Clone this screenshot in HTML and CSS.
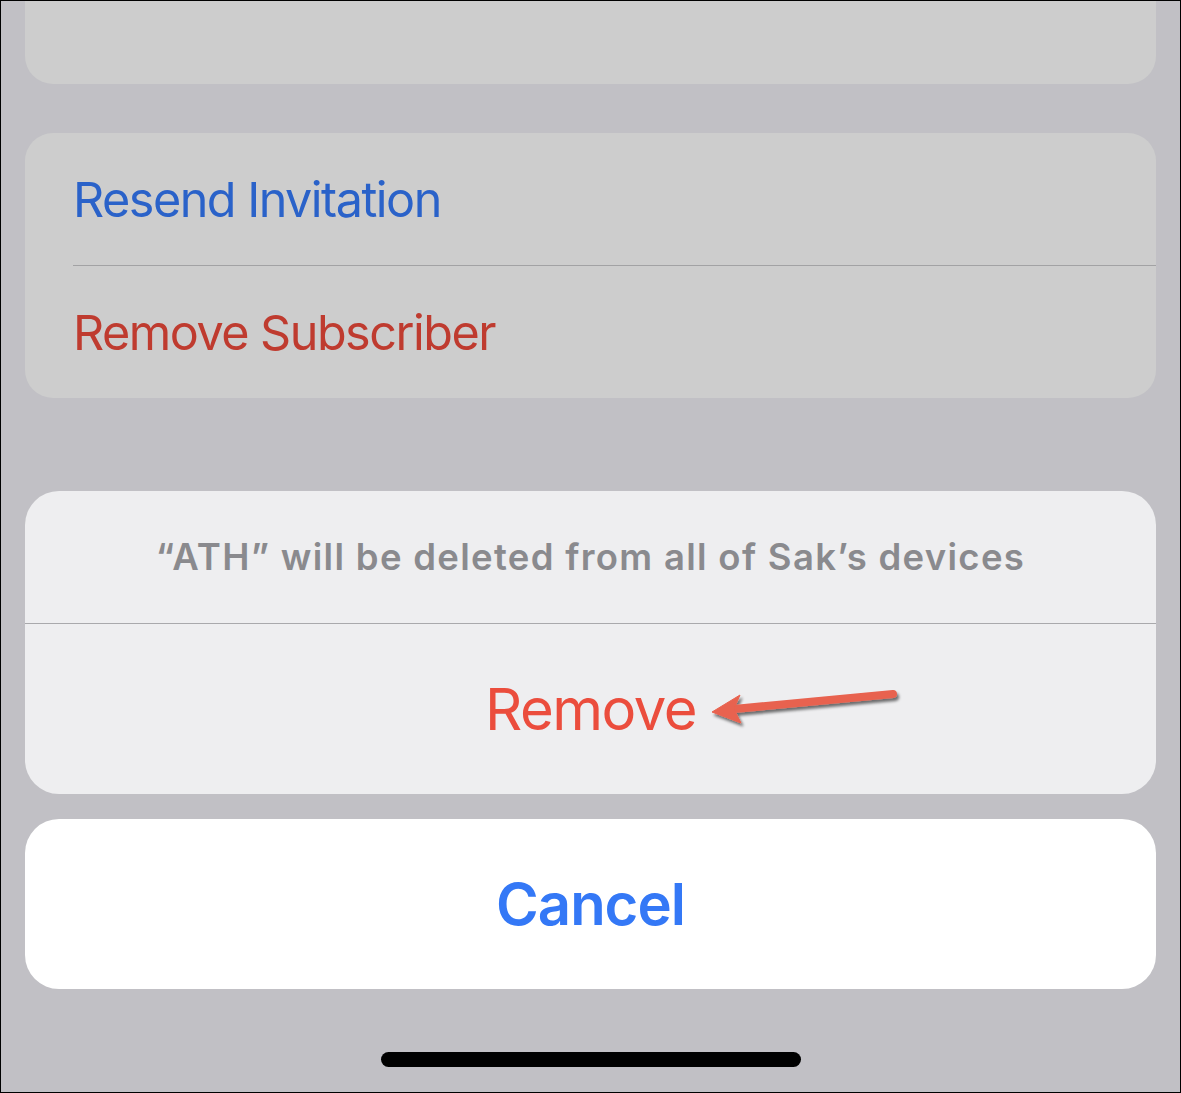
FILE: index.html
```html
<!DOCTYPE html>
<html lang="en">
<head>
<meta charset="utf-8">
<title>Remove Subscriber</title>
<link rel="stylesheet" href="styles.css">
</head>
<body>
<div class="frame">
  <div class="card card-top"></div>

  <div class="card card-list">
    <div class="row row-blue">Resend Invitation</div>
    <div class="row row-red">Remove Subscriber</div>
  </div>

  <div class="sheet">
    <div class="sheet-msg">“ATH” will be deleted from all of Sak’s devices</div>
    <div class="sheet-action">Remove</div>
  </div>

  <div class="cancel">Cancel</div>

  <div class="home-bar"></div>

  <svg class="annot" width="1181" height="1093" viewBox="0 0 1181 1093" aria-hidden="true">
    <defs>
      <filter id="sh" x="-20%" y="-50%" width="140%" height="200%">
        <feGaussianBlur in="SourceAlpha" stdDeviation="1.6"/>
        <feOffset dx="2" dy="3" result="b"/>
        <feComponentTransfer><feFuncA type="linear" slope="0.55"/></feComponentTransfer>
        <feMerge><feMergeNode/><feMergeNode in="SourceGraphic"/></feMerge>
      </filter>
    </defs>
    <g filter="url(#sh)" fill="#e8624f" stroke="#e8624f">
      <line x1="893" y1="694" x2="734" y2="709" stroke-width="8" stroke-linecap="round"/>
      <polygon points="712,712 740,695 734,709 741,723" stroke-width="1" stroke-linejoin="round"/>
    </g>
  </svg>
</div>
</body>
</html>
```
FILE: styles.css
```css
html, body {
  margin: 0;
  padding: 0;
  background: #c1c0c5;
}

.frame {
  position: relative;
  box-sizing: border-box;
  width: 1181px;
  height: 1093px;
  border: 1px solid #000;
  background: #c1c0c5;
  padding: 0 24px;
  display: flex;
  flex-direction: column;
  overflow: hidden;
  font-family: Inter, "Noto Sans", "Liberation Sans", sans-serif;
}

.card {
  background: #cdcdcd;
}

.card-top {
  height: 83px;
  border-radius: 0 0 28px 28px;
  flex: none;
}

.card-list {
  margin-top: 49px;
  border-radius: 28px;
  flex: none;
}

.row {
  height: 132px;
  display: flex;
  align-items: center;
  padding-left: 48px;
  font-size: 48.5px;
  letter-spacing: -1.5px;
}

.row-blue {
  color: #2a62c9;
  border-bottom: 1px solid #a2a2a4;
  margin-left: 48px;
  padding-left: 0;
}

.row-red {
  color: #bf3b2f;
  height: 132px;
}

.sheet {
  margin-top: 93px;
  background: #eeeef0;
  border-radius: 34px;
  flex: none;
}

.sheet-msg {
  height: 132px;
  display: flex;
  align-items: center;
  justify-content: center;
  border-bottom: 1px solid #a9a9ac;
  color: #8a8a8e;
  font-weight: 600;
  font-size: 36.5px;
  letter-spacing: 1.3px;
}

.sheet-action {
  height: 170px;
  display: flex;
  align-items: center;
  justify-content: center;
  color: #eb4d3d;
  font-size: 58px;
  letter-spacing: -1.5px;
}

.cancel {
  margin-top: 25px;
  height: 170px;
  background: #ffffff;
  border-radius: 34px;
  display: flex;
  align-items: center;
  justify-content: center;
  color: #3478f6;
  font-weight: 600;
  font-size: 58px;
  letter-spacing: -1px;
  flex: none;
}

.home-bar {
  align-self: center;
  margin-top: 63px;
  width: 420px;
  height: 15px;
  border-radius: 8px;
  background: #000;
  flex: none;
}

.annot {
  position: absolute;
  left: -1px;
  top: -1px;
  pointer-events: none;
}
```
